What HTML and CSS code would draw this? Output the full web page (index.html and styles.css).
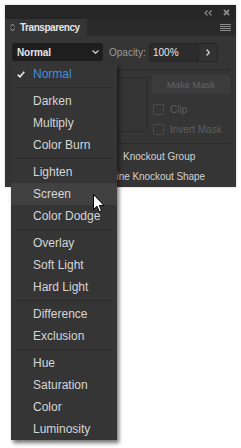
FILE: index.html
```html
<!DOCTYPE html>
<html>
<head>
<meta charset="utf-8">
<link rel="stylesheet" href="styles.css">
</head>
<body>
<div class="panel">
  <div class="titlebar">
    <svg class="collapse" width="8" height="6" viewBox="0 0 8 6"><polyline points="3.5,0.5 1,3 3.5,5.5" fill="none" stroke="#8a8a8a" stroke-width="1.2"/><polyline points="7.5,0.5 5,3 7.5,5.5" fill="none" stroke="#8a8a8a" stroke-width="1.2"/></svg>
    <svg class="close" width="7" height="7" viewBox="0 0 7 7"><path d="M1 1L6 6M6 1L1 6" stroke="#8a8a8a" stroke-width="1.8"/></svg>
  </div>
  <div class="tabrow">
    <div class="tab">
      <svg class="updown" width="5" height="9" viewBox="0 0 5 9"><polyline points="0.5,3.5 2.5,1 4.5,3.5" fill="none" stroke="#9a9a9a" stroke-width="1"/><polyline points="0.5,5.5 2.5,8 4.5,5.5" fill="none" stroke="#9a9a9a" stroke-width="1"/></svg>
      <span class="tabtitle">Transparency</span>
    </div>
    <svg class="hamburger" width="11" height="7" viewBox="0 0 11 7"><path d="M0 0.5H11M0 2.5H11M0 4.5H11M0 6.5H11" stroke="#8c8c8c" stroke-width="1"/></svg>
  </div>
  <div class="content">
    <div class="toprow">
      <div class="select">
        <span class="selval">Normal</span>
        <svg class="chev" width="7" height="4" viewBox="0 0 7 4"><polyline points="0.5,0.5 3.5,3.3 6.5,0.5" fill="none" stroke="#c8c8c8" stroke-width="1.3"/></svg>
      </div>
      <span class="oplabel">Opacity:</span>
      <div class="opbox">
        <span class="opval">100%</span>
        <div class="opbtn"><svg width="4" height="7" viewBox="0 0 4 7"><polyline points="0.6,0.5 3.3,3.5 0.6,6.5" fill="none" stroke="#d0d0d0" stroke-width="1.3"/></svg></div>
      </div>
    </div>
    <div class="sep"></div>
    <div class="mid">
      <div class="thumbs">
        <div class="thumb"></div>
        <div class="thumb"></div>
      </div>
      <div class="maskcol">
        <div class="maskbtn">Make Mask</div>
        <div class="chk dim"><span class="box"></span><span>Clip</span></div>
        <div class="chk dim"><span class="box"></span><span>Invert Mask</span></div>
      </div>
    </div>
    <div class="sep"></div>
    <div class="opts">
      <div class="chk opt"><span class="box"></span><span>Isolate Blending</span></div>
      <div class="chk opt"><span class="box"></span><span>Knockout Group</span></div>
      <div class="chk opt wide"><span class="box"></span><span>Opacity &amp; Mask Define Knockout Shape</span></div>
    </div>
  </div>

  <div class="menu">
    <div class="item checked"><svg class="check" width="8" height="7" viewBox="0 0 8 7"><polyline points="0.8,3.6 3,5.8 7.3,0.8" fill="none" stroke="#e6e6e6" stroke-width="1.7"/></svg>Normal</div>
    <div class="msep"></div>
    <div class="item">Darken</div>
    <div class="item">Multiply</div>
    <div class="item">Color Burn</div>
    <div class="msep"></div>
    <div class="item">Lighten</div>
    <div class="item hover">Screen</div>
    <div class="item">Color Dodge</div>
    <div class="msep"></div>
    <div class="item">Overlay</div>
    <div class="item">Soft Light</div>
    <div class="item">Hard Light</div>
    <div class="msep"></div>
    <div class="item">Difference</div>
    <div class="item">Exclusion</div>
    <div class="msep"></div>
    <div class="item">Hue</div>
    <div class="item">Saturation</div>
    <div class="item">Color</div>
    <div class="item">Luminosity</div>
  </div>

  <svg class="cursor" width="12" height="19" viewBox="0 0 12 19"><path d="M0.5 0.5V15.5L4 12.2L6.4 17.8L8.6 16.8L6.3 11.4H11L0.5 0.5Z" fill="#ffffff" stroke="#000000" stroke-width="1" stroke-linejoin="round"/></svg>
</div>
</body>
</html>
```
FILE: styles.css
```css
html, body {
  margin: 0;
  padding: 0;
  background: #ffffff;
}
body {
  font-family: "Liberation Sans", Arial, sans-serif;
  width: 241px;
  height: 448px;
  overflow: hidden;
}
.panel {
  position: relative;
  margin: 5px 0 0 5px;
  width: 231px;
  height: 182px;
  background: #353535;
  display: flex;
  flex-direction: column;
  box-shadow: 0 0 2px rgba(0,0,0,0.25);
}
.titlebar {
  height: 14px;
  background: #262626;
  display: flex;
  align-items: center;
  justify-content: flex-end;
  gap: 11px;
  padding-right: 6px;
}
.collapse { margin-top: 1px; }
.tabrow {
  height: 17px;
  background: #2a2a2a;
  display: flex;
  align-items: center;
  justify-content: space-between;
  padding-right: 5px;
}
.tab {
  width: 82px;
  height: 17px;
  background: #353535;
  display: flex;
  align-items: center;
  gap: 5px;
  padding-left: 5px;
  box-sizing: border-box;
}
.tabtitle {
  color: #e4e4e4;
  font-size: 10px;
  font-weight: bold;
  letter-spacing: -0.45px;
}
.content {
  padding: 7px 6px 0 7px;
  display: flex;
  flex-direction: column;
}
.toprow {
  display: flex;
  align-items: center;
  height: 18px;
}
.select {
  width: 91px;
  height: 18px;
  background: #1e1e1e;
  border-radius: 2px;
  display: flex;
  align-items: center;
  justify-content: space-between;
  padding: 0 5px;
  box-sizing: border-box;
}
.selval {
  color: #e6e6e6;
  font-size: 10px;
  font-weight: bold;
  letter-spacing: -0.1px;
}
.chev { margin-right: -1px; }
.oplabel {
  color: #9a9a9a;
  font-size: 10px;
  margin-left: 6px;
  width: 40px;
}
.opbox {
  width: 69px;
  height: 19px;
  border: 1px solid #262626;
  box-sizing: border-box;
  background: #2c2c2c;
  border-radius: 2px;
  display: flex;
  align-items: center;
}
.opval {
  flex: 1;
  color: #e8e8e8;
  font-size: 10px;
  padding-left: 3px;
}
.opbtn {
  width: 18px;
  height: 17px;
  border-left: 1px solid #262626;
  background: #323232;
  display: flex;
  align-items: center;
  justify-content: center;
}
.sep {
  height: 1px;
  background: #2a2a2a;
  margin-top: 8px;
}
.mid {
  display: flex;
  height: 65px;
  padding-top: 5px;
  box-sizing: border-box;
  gap: 4px;
}
.thumbs {
  display: flex;
  gap: 12px;
  margin-top: 2px;
  flex: 1;
  justify-content: flex-end;
}
.thumb {
  width: 54px;
  height: 55px;
  border: 1px solid #2b2b2b;
  box-sizing: border-box;
  border-radius: 2px;
}
.maskcol {
  width: 78px;
  display: flex;
  flex-direction: column;
  gap: 8px;
}
.maskbtn {
  height: 19px;
  background: #3b3b3b;
  color: #646464;
  font-size: 9.5px;
  display: flex;
  align-items: center;
  justify-content: center;
  border-radius: 1px;
  margin-bottom: 1px;
}
.chk {
  display: flex;
  align-items: center;
  gap: 6px;
  font-size: 10px;
  height: 12px;
}
.box {
  width: 10px;
  height: 10px;
  border: 1px solid #4a4a4a;
  border-radius: 1px;
  box-sizing: border-box;
  flex: none;
}
.chk.dim {
  color: #5e5e5e;
  padding-left: 1px;
}
.chk.dim .box { width: 11px; height: 11px; }
.opts {
  display: grid;
  grid-template-columns: 94px 1fr;
  grid-auto-rows: 20px;
  padding-top: 2px;
}
.opt {
  height: 20px;
  color: #d2d2d2;
  gap: 7px;
}
.opt .box { border-color: #5a5a5a; }
.opt.wide { grid-column: 1 / 3; }
.opt.wide span:last-child { letter-spacing: -0.05px; }

.menu {
  position: absolute;
  left: 6px;
  top: 58px;
  width: 106px;
  background: #353535;
  box-shadow: 2px 3px 4px rgba(0,0,0,0.55);
  display: flex;
  flex-direction: column;
  z-index: 2;
}
.item {
  height: 22px;
  line-height: 22px;
  padding-left: 22px;
  color: #d6d6d6;
  font-size: 12px;
  position: relative;
}
.item.checked { color: #3f8fe3; }
.item.hover { background: #414141; }
.check {
  position: absolute;
  left: 6px;
  top: 8px;
}
.msep {
  height: 1px;
  background: #2b2b2b;
  margin: 2px 4px 2px 5px;
}
.cursor {
  position: absolute;
  left: 88px;
  top: 189px;
  z-index: 3;
}
```
